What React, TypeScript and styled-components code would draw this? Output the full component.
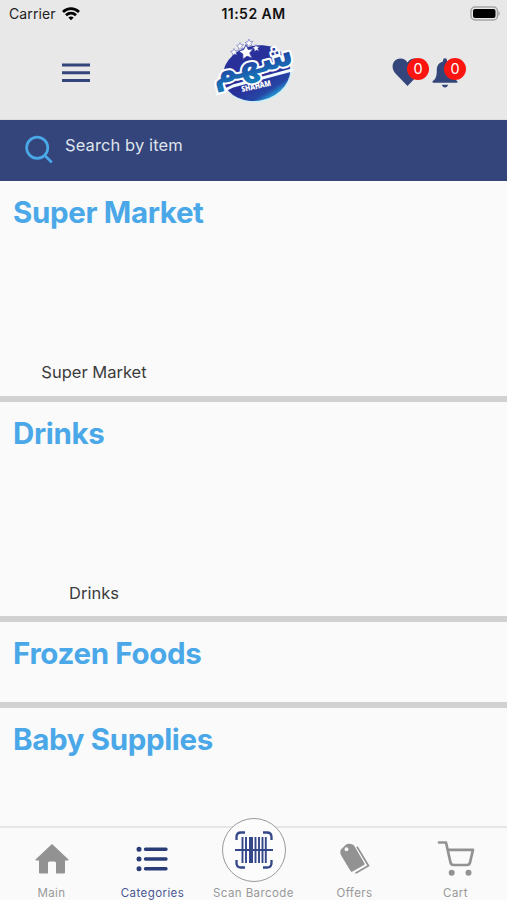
import React from "react";
import styled, { createGlobalStyle } from "styled-components";

const navy = "#33457a";
const sky = "#4ba8e8";
const grey = "#929292";

const GlobalStyle = createGlobalStyle`
  * { box-sizing: border-box; }
  body { margin: 0; background: #fafafa; font-family: Inter, "Liberation Sans", sans-serif; }
  svg { display: block; flex: none; }
`;

const Screen = styled.div`
  width: 507px;
  height: 900px;
  display: flex;
  flex-direction: column;
  overflow: hidden;
  background: #fafafa;
`;

const Top = styled.header`
  height: 120px;
  flex: none;
  background: #e8e8e8;
  border-bottom: 1px solid #dcdde2;
`;

const StatusBar = styled.div`
  height: 30px;
  display: grid;
  grid-template-columns: 1fr auto 1fr;
  align-items: center;
  padding: 0 6px 3px 9px;
  font-size: 14px;
  color: #222;
`;

const Carrier = styled.div`
  display: flex;
  align-items: center;
  gap: 6px;
  letter-spacing: 0.1px;
`;

const Clock = styled.div`
  margin-right: 3px;
  font-weight: 600;
  font-size: 14px;
  letter-spacing: 0.45px;
  color: #111;
`;

const Battery = styled.div`
  justify-self: end;
`;

const AppBar = styled.div`
  height: 80px;
  display: flex;
  align-items: center;
  padding: 5px 41px 0 62px;
`;

const LogoSlot = styled.div`
  margin: -5px 0 0 115px;
`;

const Alerts = styled.div`
  display: flex;
  margin-left: auto;
  gap: 3px;
`;

const Alert = styled.div<{ $width: number }>`
  position: relative;
  width: ${(p) => p.$width}px;
  height: 32px;
`;

const Badge = styled.span`
  position: absolute;
  top: 1px;
  right: 0;
  width: 22px;
  height: 22px;
  border-radius: 50%;
  background: #fb1510;
  color: #fff;
  font-size: 14.5px;
  line-height: 22px;
  text-align: center;
`;

const SearchBar = styled.div`
  height: 61px;
  flex: none;
  display: flex;
  align-items: flex-start;
  gap: 12px;
  padding: 15px 25px;
  background: ${navy};
`;

const SearchText = styled.span`
  color: #dfe3ec;
  font-size: 16.5px;
  line-height: 21px;
  letter-spacing: 0.1px;
`;

const List = styled.main`
  flex: 1;
  min-height: 0;
  overflow: hidden;
`;

const Section = styled.section<{ $height: number }>`
  height: ${(p) => p.$height}px;
  display: flex;
  flex-direction: column;
  justify-content: space-between;
  padding: 11px 13px 12.5px;
  border-bottom: 6px solid #d1d1d1;
`;

const Heading = styled.h2`
  margin: 0;
  font-size: 29.5px;
  line-height: 40px;
  font-weight: 700;
  letter-spacing: -0.35px;
  color: ${sky};
`;

const ItemName = styled.div`
  width: 162px;
  text-align: center;
  font-size: 16.5px;
  line-height: 22px;
  color: #3c3c3c;
`;

const TabBar = styled.nav`
  height: 74px;
  flex: none;
  display: grid;
  grid-template-columns: repeat(5, 101px);
  grid-template-rows: 72px;
  justify-content: center;
  border-top: 2px solid #e6e6e6;
`;

const Tab = styled.div<{ $active?: boolean }>`
  min-height: 0;
  display: flex;
  flex-direction: column;
  align-items: center;
  justify-content: flex-end;
  gap: 6px;
  font-size: 11.5px;
  line-height: 14px;
  letter-spacing: 0.42px;
  white-space: nowrap;
  color: ${(p) => (p.$active ? "#4a5794" : "#999")};
`;

const ScanButton = styled.div`
  width: 64px;
  height: 64px;
  flex: none;
  display: flex;
  align-items: center;
  justify-content: center;
  border: 1px solid #9a9a9a;
  border-radius: 50%;
  background: #fcfcfc;
  margin-bottom: -2px;
`;

const WifiIcon = () => (
  <svg width="18" height="14" viewBox="0 0 18 14" fill="none" stroke="#000" strokeWidth="2.7">
    <path d="M1 5C5.600.6 12.400.6 17 5" />
    <path d="M4 8.300C6.800 5.500 11.200 5.500 14 8.300" />
    <path d="M6.300 10.500Q9 8.500 11.700 10.500L9 13.300Z" fill="#000" stroke="none" />
  </svg>
);

const BatteryIcon = () => (
  <svg width="31" height="15" viewBox="0 0 31 15">
    <rect x="1" y="1" width="26.500" height="13" rx="4" fill="#e8e8e8" stroke="#a5a5a5" strokeWidth="1.500" />
    <rect x="3" y="3" width="22.500" height="9" rx="2" fill="#000" />
    <path d="M28.500 5q2.500 2.500 0 5z" fill="#999" />
  </svg>
);

const MenuIcon = () => (
  <svg width="28" height="20" viewBox="0 0 28 20" fill={navy}>
    <path d="M0 .5h28v3H0zM0 8.200h28v3H0zM0 15.900h28v3H0z" />
  </svg>
);

const star = "M0-7 2-2.500 7-3 3.500 1 6 6 1 4-3 7-3 2-7-1-2.200-2.300Z";

const Logo = () => (
  <svg width="100" height="80" viewBox="0 0 100 80">
    <defs>
      <linearGradient id="disc" x1="0.300" y1="0" x2="0.700" y2="1">
        <stop offset="0.6" stopColor="#29309a" />
        <stop offset="0.85" stopColor="#2546a5" />
        <stop offset="1" stopColor="#25aee0" />
      </linearGradient>
      <linearGradient id="letters" x1="0" y1="0" x2="0" y2="1">
        <stop offset="0.35" stopColor="#23399f" />
        <stop offset="0.9" stopColor="#1678b8" />
      </linearGradient>
    </defs>
    <g transform="rotate(-14 52 43)">
      <ellipse cx="52" cy="44" rx="34.500" ry="28" fill="#c8eefa" />
      <ellipse cx="51.500" cy="43" rx="34" ry="27.500" fill="url(#disc)" />
    </g>
    <path d="M12 64 28 56 87 40" fill="none" stroke="#effbff" strokeWidth="3" strokeLinejoin="round" strokeLinecap="round" />
    <g fill="#fff" stroke="#3c43a7" strokeWidth="0.900">
      <path d={star} transform="translate(29 22) scale(.5)" />
      <path d={star} transform="translate(35 16) scale(.5)" />
      <path d={star} transform="translate(44 13) scale(.55)" />
      <path d={star} transform="translate(51 18) scale(.5)" />
      <path d={star} transform="translate(41 22) scale(1.050)" />
    </g>
    <text
      transform="translate(9 55) rotate(-15)"
      fontFamily="DejaVu Sans, sans-serif"
      fontWeight="700"
      fontSize="34.500"
      fill="url(#letters)"
      stroke="#fff"
      strokeWidth="4"
      strokeLinejoin="round"
      paintOrder="stroke"
    >
      شهم
    </text>
    <text
      transform="translate(37 62) rotate(-12)"
      fontFamily="Open Sans, sans-serif"
      fontWeight="800"
      fontSize="8"
      textLength="30"
      lengthAdjust="spacingAndGlyphs"
      fill="#fff"
    >
      SHAHAM
    </text>
  </svg>
);

const HeartIcon = () => (
  <svg width="31" height="30" viewBox="0 0 31 30" fill={navy}>
    <path d="M15.500 29 3 16C-1 11 0 4 5.500 2 9.500.5 13.500 2.200 15.500 5.500 17.500 2.200 21.500.5 25.500 2 31 4 32 11 28 16Z" />
  </svg>
);

const BellIcon = () => (
  <svg width="26" height="31" viewBox="0 0 26 31" fill={navy}>
    <path d="M11 3.200a2 2 0 0 1 4 0v1.200c4 1 6.200 4.300 6.200 8.500 0 6.500 1.300 9 4 11.100q1 1.400-.6 1.800H1.400Q-.2 25.400.8 24c2.700-2.100 4-4.600 4-11.100 0-4.200 2.200-7.500 6.200-8.500zM9.800 27.800h6.400q-.8 2.700-3.200 2.700t-3.200-2.700z" />
  </svg>
);

const SearchIcon = () => (
  <svg width="28" height="28" viewBox="0 0 28 28" fill="none" stroke={sky} strokeWidth="2.700">
    <circle cx="12.200" cy="12.800" r="10.600" />
    <path d="m19.800 20.500 7 7" />
  </svg>
);

const HomeIcon = () => (
  <svg width="34" height="38" viewBox="0 0 34 38" fill={grey}>
    <path d="M17 2 33.500 17.500q.5 1-1 1H30v12q0 1-1 1h-8V21q0-1.500-1.500-1.500h-5Q13 19.500 13 21v10.500H5q-1 0-1-1v-12H1.500q-1.500 0-1-1Z" />
  </svg>
);

const ListIcon = () => (
  <svg width="34" height="38" viewBox="0 0 34 38" fill="none" stroke="#293c78" strokeWidth="3.400" strokeLinecap="round">
    <path d="M9.500 7.200h20.500M9.500 17h20.500M9.500 26.800h20.500" />
    <path d="M3 7.200h.01M3 17h.01M3 26.800h.01" strokeWidth="5" />
  </svg>
);

const BarcodeIcon = () => (
  <svg width="38" height="38" viewBox="0 0 38 38" fill="none" stroke="#344789">
    <path d="M1.500 9V6q0-4.500 4.500-4.500h4M28 1.500h4q4.500 0 4.500 4.500v3M1.500 29v3q0 4.500 4.500 4.500h4M28 36.500h4q4.500 0 4.500-4.500v-3" strokeWidth="2.300" />
    <path d="M7.500 6v26M11 6v26M20.500 6v26M24 6v26M27.500 6v26M30.800 6v26" strokeWidth="1.900" />
    <path d="M16 6v26" strokeWidth="4" />
    <path d="M0 19h38" strokeWidth="1.800" />
  </svg>
);

const TagsIcon = () => (
  <svg width="32" height="38" viewBox="0 0 32 38">
    <path
      d="m1.500 8 5-5Q9 1 12 2q2.500.5 3.500 2.200l10 17.200q.5 1-.5 1.600L13.500 29.600q-1.200.7-1.800-.4L2.500 14Q.5 10.500 1.500 8ZM7.500 5.200a2 2 0 1 0 .01 4 2 2 0 1 0-.01-4Z"
      fill={grey}
      fillRule="evenodd"
    />
    <path d="m18 4.800 11.500 19-13 7.500" fill="none" stroke={grey} strokeWidth="1.700" />
  </svg>
);

const CartIcon = () => (
  <svg width="38" height="40" viewBox="0 0 38 40" fill="none" stroke={grey} strokeWidth="2.700" strokeLinecap="round" strokeLinejoin="round">
    <path d="M2 2.500h7l4.500 20q.6 2.500 3 2.500h13.500q2.500 0 3-2.500L36 9.800H10.800" />
    <circle cx="14.700" cy="32.800" r="3" fill={grey} stroke="none" />
    <circle cx="31.500" cy="32.800" r="3" fill={grey} stroke="none" />
  </svg>
);

const sections = [
  { title: "Super Market", item: "Super Market", height: 220.5 },
  { title: "Drinks", item: "Drinks", height: 220.5 },
  { title: "Frozen Foods", height: 86 },
  { title: "Baby Supplies", height: 140 },
];

export default function App() {
  return (
    <Screen>
      <GlobalStyle />
      <Top>
        <StatusBar>
          <Carrier>
            Carrier <WifiIcon />
          </Carrier>
          <Clock>11:52 AM</Clock>
          <Battery>
            <BatteryIcon />
          </Battery>
        </StatusBar>
        <AppBar>
          <MenuIcon />
          <LogoSlot>
            <Logo />
          </LogoSlot>
          <Alerts>
            <Alert $width={37}>
              <HeartIcon />
              <Badge>0</Badge>
            </Alert>
            <Alert $width={34}>
              <BellIcon />
              <Badge>0</Badge>
            </Alert>
          </Alerts>
        </AppBar>
      </Top>
      <SearchBar>
        <SearchIcon />
        <SearchText>Search by item</SearchText>
      </SearchBar>
      <List>
        {sections.map((s) => (
          <Section key={s.title} $height={s.height}>
            <Heading>{s.title}</Heading>
            {s.item && <ItemName>{s.item}</ItemName>}
          </Section>
        ))}
      </List>
      <TabBar>
        <Tab>
          <HomeIcon />
          Main
        </Tab>
        <Tab $active>
          <ListIcon />
          Categories
        </Tab>
        <Tab>
          <ScanButton>
            <BarcodeIcon />
          </ScanButton>
          Scan Barcode
        </Tab>
        <Tab>
          <TagsIcon />
          Offers
        </Tab>
        <Tab>
          <CartIcon />
          Cart
        </Tab>
      </TabBar>
    </Screen>
  );
}
